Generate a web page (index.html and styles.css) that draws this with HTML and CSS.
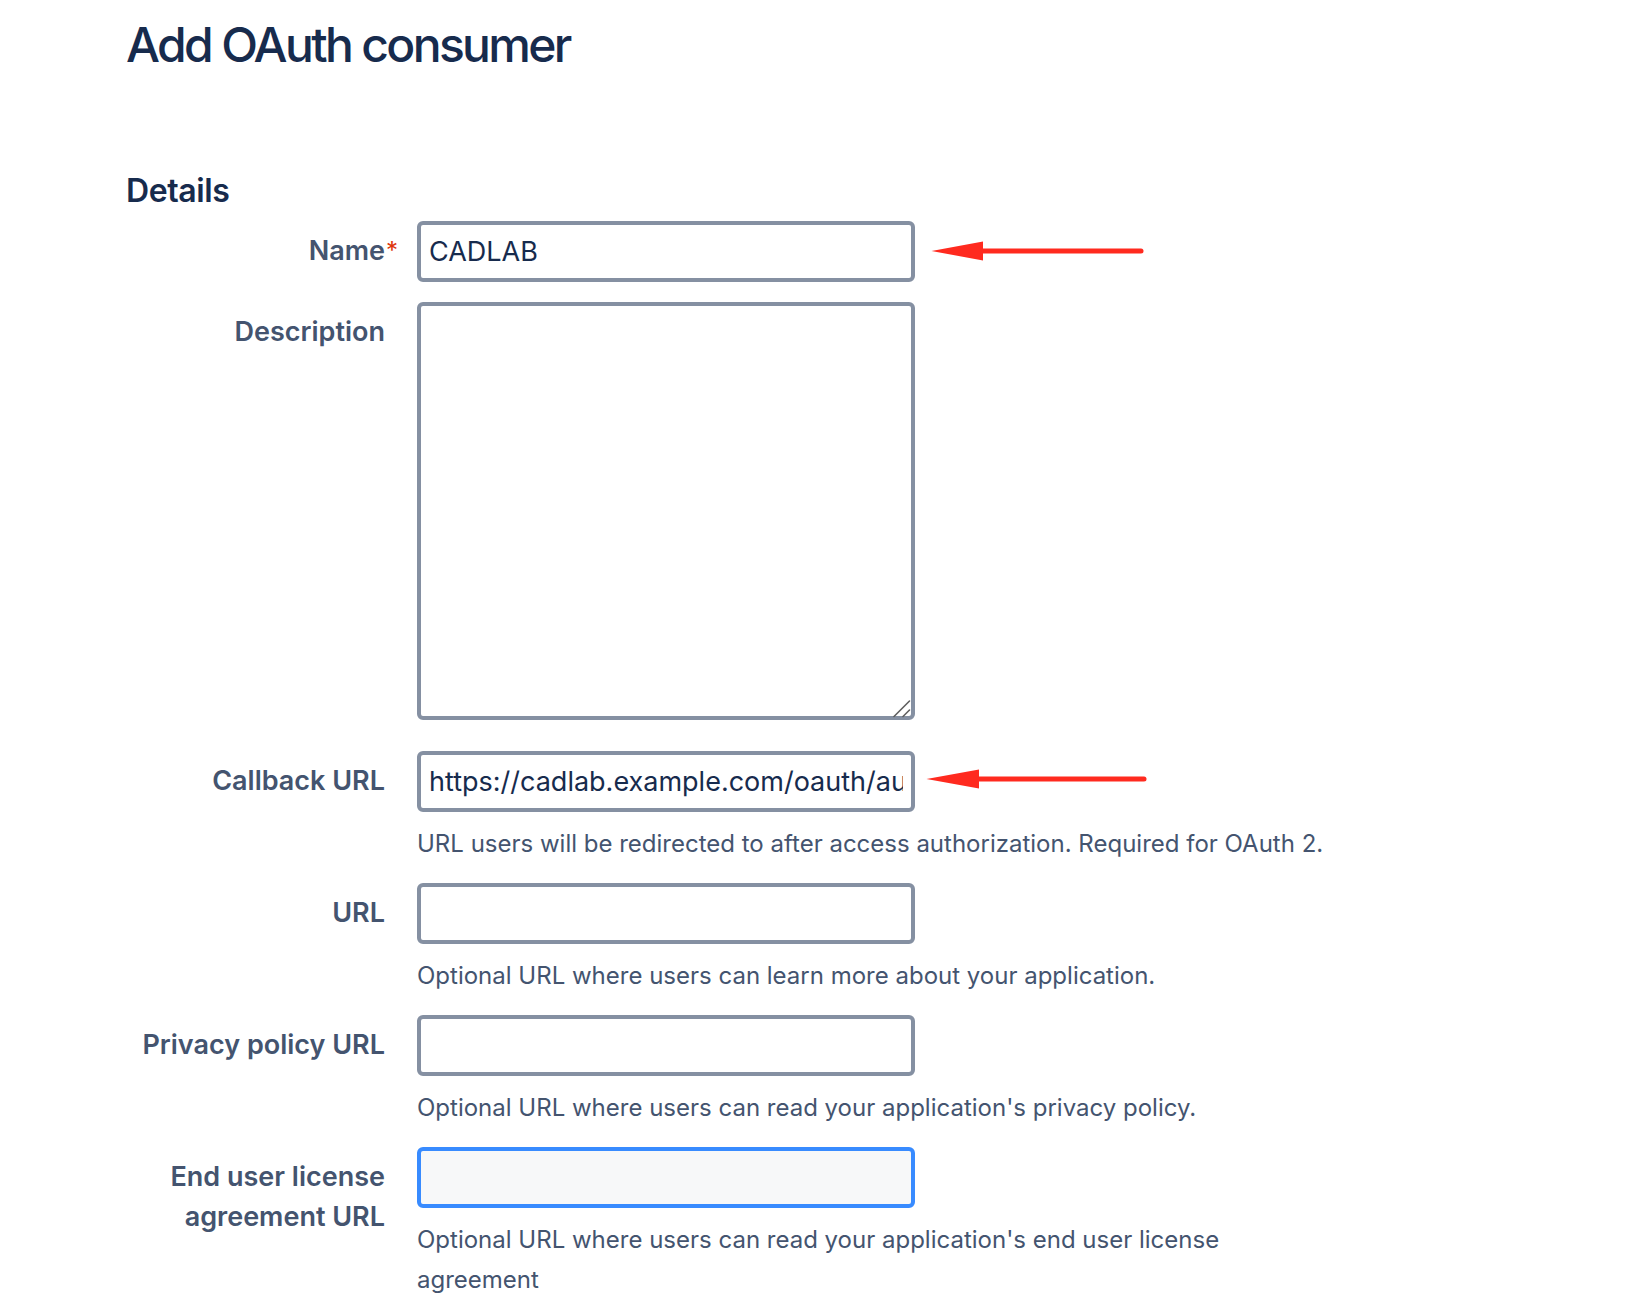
FILE: index.html
```
<!DOCTYPE html>
<html lang="en">
<head>
<meta charset="utf-8">
<title>Add OAuth consumer</title>
<link rel="stylesheet" href="styles.css">
</head>
<body>
<main class="page">
  <h1 class="title">Add OAuth consumer</h1>
  <h2 class="section">Details</h2>
  <form class="form">
    <div class="field-group">
      <label class="label" for="name">Name<span class="req">*</span></label>
      <div class="field">
        <input class="text" id="name" type="text" value="CADLAB">
        <svg class="arrow arrow-name" width="220" height="24" viewBox="0 0 220 24" aria-hidden="true">
          <line x1="50" y1="12" x2="213" y2="12" stroke="#FF2A1F" stroke-width="5" stroke-linecap="round"/>
          <polygon points="3.5,12 55,2.5 55,21.5" fill="#FF2A1F"/>
        </svg>
      </div>
    </div>
    <div class="field-group">
      <label class="label" for="desc">Description</label>
      <div class="field">
        <textarea class="textarea" id="desc"></textarea>
        <svg class="grip" width="20" height="20" viewBox="0 0 20 20" aria-hidden="true">
          <line x1="1" y1="18.5" x2="16.5" y2="3" stroke="#5E5E5E" stroke-width="1.6" stroke-linecap="round"/>
          <line x1="10" y1="18.5" x2="16.5" y2="12" stroke="#5E5E5E" stroke-width="1.6" stroke-linecap="round"/>
        </svg>
      </div>
    </div>
    <div class="field-group">
      <label class="label" for="callback">Callback URL</label>
      <div class="field">
        <input class="text" id="callback" type="text" value="https://cadlab.example.com/oauth/authorize">
        <svg class="arrow arrow-callback" width="226" height="24" viewBox="0 0 226 24" aria-hidden="true">
          <line x1="50" y1="12" x2="221" y2="12" stroke="#FF2A1F" stroke-width="5" stroke-linecap="round"/>
          <polygon points="3.5,12 56,2.5 56,21.5" fill="#FF2A1F"/>
        </svg>
        <div class="desc">URL users will be redirected to after access authorization. Required for OAuth 2.</div>
      </div>
    </div>
    <div class="field-group">
      <label class="label" for="url">URL</label>
      <div class="field">
        <input class="text" id="url" type="text" value="">
        <div class="desc">Optional URL where users can learn more about your application.</div>
      </div>
    </div>
    <div class="field-group">
      <label class="label" for="privacy">Privacy policy URL</label>
      <div class="field">
        <input class="text" id="privacy" type="text" value="">
        <div class="desc">Optional URL where users can read your application's privacy policy.</div>
      </div>
    </div>
    <div class="field-group">
      <label class="label" for="eula">End user license agreement URL</label>
      <div class="field">
        <input class="text text-focus" id="eula" type="text" value="">
        <div class="desc">Optional URL where users can read your application's end user license agreement</div>
      </div>
    </div>
  </form>
</main>
</body>
</html>
```
FILE: styles.css
```
html, body {
  margin: 0;
  padding: 0;
  background: #ffffff;
}

body {
  font-family: Inter, "Noto Sans", "Liberation Sans", sans-serif;
  color: #172B4D;
}

.page {
  padding: 17px 0 0 126px;
}

.title {
  margin: 0;
  font-size: 48px;
  line-height: 56px;
  font-weight: 500;
  letter-spacing: -2.65px;
  color: #172B4D;
}

.section {
  margin: 98px 0 0;
  font-size: 32px;
  line-height: 40px;
  font-weight: 600;
  letter-spacing: -0.4px;
  color: #172B4D;
}

.form {
  margin-top: 10px;
}

.field-group {
  display: flex;
  gap: 32px;
  margin-bottom: 20px;
}

.label {
  position: relative;
  flex: none;
  width: 259px;
  box-sizing: border-box;
  padding-top: 10px;
  text-align: right;
  font-size: 27px;
  line-height: 40px;
  font-weight: 600;
  color: #44546F;
}

.req {
  position: absolute;
  top: 18px;
  margin-left: 1px;
  font-size: 24px;
  line-height: 24px;
  font-weight: 400;
  color: #DE350B;
}

.field {
  position: relative;
  flex: none;
  width: 912px;
}

.text {
  display: block;
  width: 498px;
  height: 61px;
  box-sizing: border-box;
  margin: 0;
  padding: 0 8px;
  border: 4px solid #8590A2;
  border-radius: 6px;
  background: #ffffff;
  font-family: Inter, "Noto Sans", "Liberation Sans", sans-serif;
  font-size: 27px;
  color: #172B4D;
  outline: none;
}

.text-focus {
  border-color: #388BFF;
  background: #F7F8F9;
}

.textarea {
  display: block;
  width: 498px;
  height: 418px;
  box-sizing: border-box;
  margin: 0 0 11px;
  padding: 8px;
  border: 4px solid #8590A2;
  border-radius: 6px;
  background: #ffffff;
  font-family: Inter, "Noto Sans", "Liberation Sans", sans-serif;
  font-size: 27px;
  color: #172B4D;
  outline: none;
  resize: none;
}

.grip {
  position: absolute;
  left: 476px;
  top: 396px;
}

.desc {
  margin-top: 12px;
  margin-bottom: -1px;
  font-size: 24px;
  line-height: 40px;
  color: #44546F;
}

.arrow {
  position: absolute;
  top: 18px;
}

.arrow-name {
  left: 511px;
}

.arrow-callback {
  left: 506px;
  top: 16px;
}
```
